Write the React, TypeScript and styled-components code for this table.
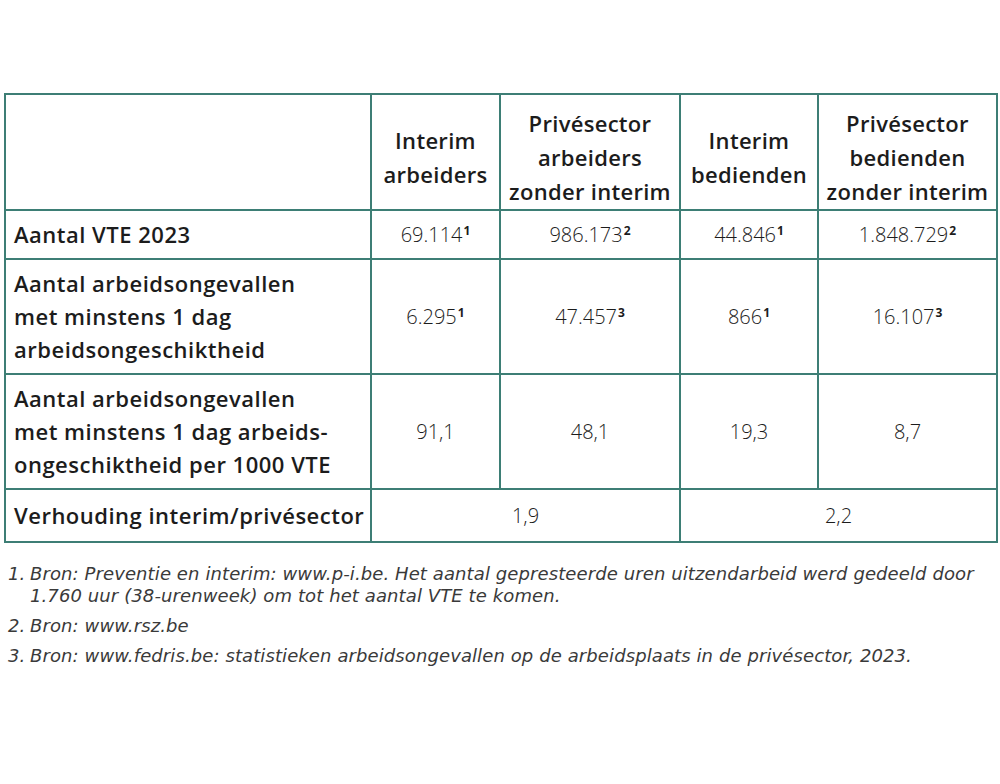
import React from "react";
import styled, { createGlobalStyle } from "styled-components";

const Global = createGlobalStyle`
  html, body { margin: 0; padding: 0; background: #ffffff; }
  body { font-family: "Open Sans", "Noto Sans", sans-serif; color: #1c1c1c; }
`;

const Page = styled.div`
  width: 1000px;
  height: 784px;
  box-sizing: border-box;
  padding: 93px 4px 0 4px;
  display: flex;
  flex-direction: column;
`;

const Table = styled.table`
  width: 992px;
  table-layout: fixed;
  border-collapse: collapse;
  border: 2px solid #3d7e75;
`;

const Row = styled.tr<{ $h: number }>`
  height: ${(p) => p.$h}px;
`;

const HeadCell = styled.th`
  border: 2px solid #3d7e75;
  font-size: 22px;
  font-weight: 600;
  letter-spacing: 0.3px;
  line-height: 34px;
  text-align: center;
  vertical-align: middle;
  padding: 10px 0 0 0;
  color: #1c1c1c;
  white-space: nowrap;
`;

const LabelCell = styled.th`
  border: 2px solid #3d7e75;
  font-size: 22px;
  font-weight: 600;
  letter-spacing: 0.5px;
  line-height: 33px;
  text-align: left;
  vertical-align: middle;
  padding: 0 4px 0 8px;
  color: #1c1c1c;
  white-space: nowrap;
`;

const ValueCell = styled.td`
  border: 2px solid #3d7e75;
  font-size: 20px;
  font-weight: 300;
  text-align: center;
  vertical-align: middle;
  padding: 0;
  color: #1c1c1c;
`;

const Sup = styled.sup`
  font-size: 12px;
  font-weight: 700;
  vertical-align: 7px;
  line-height: 0;
  margin-left: 1px;
`;

const Notes = styled.ol`
  margin: 20px 0 0 0;
  padding: 0;
  list-style: none;
  display: flex;
  flex-direction: column;
  gap: 8px;
`;

const Note = styled.li`
  display: grid;
  grid-template-columns: 22px 1fr;
  padding-left: 4px;
  font-family: "DejaVu Sans", "Open Sans", sans-serif;
  font-size: 18px;
  font-weight: 400;
  letter-spacing: 0.1px;
  font-style: italic;
  line-height: 22px;
  color: #3a3a3a;
  white-space: nowrap;
`;

const cols = [366, 129, 180, 138, 179];

const rows: { label: React.ReactNode; h: number; values: [string, string][] }[] = [
  {
    label: "Aantal VTE 2023",
    h: 49,
    values: [
      ["69.114", "1"],
      ["986.173", "2"],
      ["44.846", "1"],
      ["1.848.729", "2"],
    ],
  },
  {
    label: (
      <>
        Aantal arbeidsongevallen
        <br />
        met minstens 1 dag
        <br />
        arbeidsongeschiktheid
      </>
    ),
    h: 115,
    values: [
      ["6.295", "1"],
      ["47.457", "3"],
      ["866", "1"],
      ["16.107", "3"],
    ],
  },
  {
    label: (
      <>
        Aantal arbeidsongevallen
        <br />
        met minstens 1 dag arbeids-
        <br />
        ongeschiktheid per 1000 VTE
      </>
    ),
    h: 115,
    values: [
      ["91,1", ""],
      ["48,1", ""],
      ["19,3", ""],
      ["8,7", ""],
    ],
  },
];

export default function App() {
  return (
    <>
      <Global />
      <Page>
        <Table>
          <colgroup>
            {cols.map((w, i) => (
              <col key={i} style={{ width: w }} />
            ))}
          </colgroup>
          <thead>
            <Row $h={116}>
              <HeadCell />
              <HeadCell>
                Interim
                <br />
                arbeiders
              </HeadCell>
              <HeadCell>
                Privésector
                <br />
                arbeiders
                <br />
                zonder interim
              </HeadCell>
              <HeadCell>
                Interim
                <br />
                bedienden
              </HeadCell>
              <HeadCell>
                Privésector
                <br />
                bedienden
                <br />
                zonder interim
              </HeadCell>
            </Row>
          </thead>
          <tbody>
            {rows.map((r, i) => (
              <Row $h={r.h} key={i}>
                <LabelCell>{r.label}</LabelCell>
                {r.values.map(([v, s], j) => (
                  <ValueCell key={j}>
                    {v}
                    {s && <Sup>{s}</Sup>}
                  </ValueCell>
                ))}
              </Row>
            ))}
            <Row $h={53}>
              <LabelCell>Verhouding interim/privésector</LabelCell>
              <ValueCell colSpan={2}>1,9</ValueCell>
              <ValueCell colSpan={2}>2,2</ValueCell>
            </Row>
          </tbody>
        </Table>
        <Notes>
          <Note>
            <span>1.</span>
            <span>
              Bron: Preventie en interim: www.p-i.be. Het aantal gepresteerde uren uitzendarbeid werd gedeeld door
              <br />
              1.760 uur (38-urenweek) om tot het aantal VTE te komen.
            </span>
          </Note>
          <Note>
            <span>2.</span>
            <span>Bron: www.rsz.be</span>
          </Note>
          <Note>
            <span>3.</span>
            <span>
              Bron: www.fedris.be: statistieken arbeidsongevallen op de arbeidsplaats in de privésector, 2023.
            </span>
          </Note>
        </Notes>
      </Page>
    </>
  );
}
